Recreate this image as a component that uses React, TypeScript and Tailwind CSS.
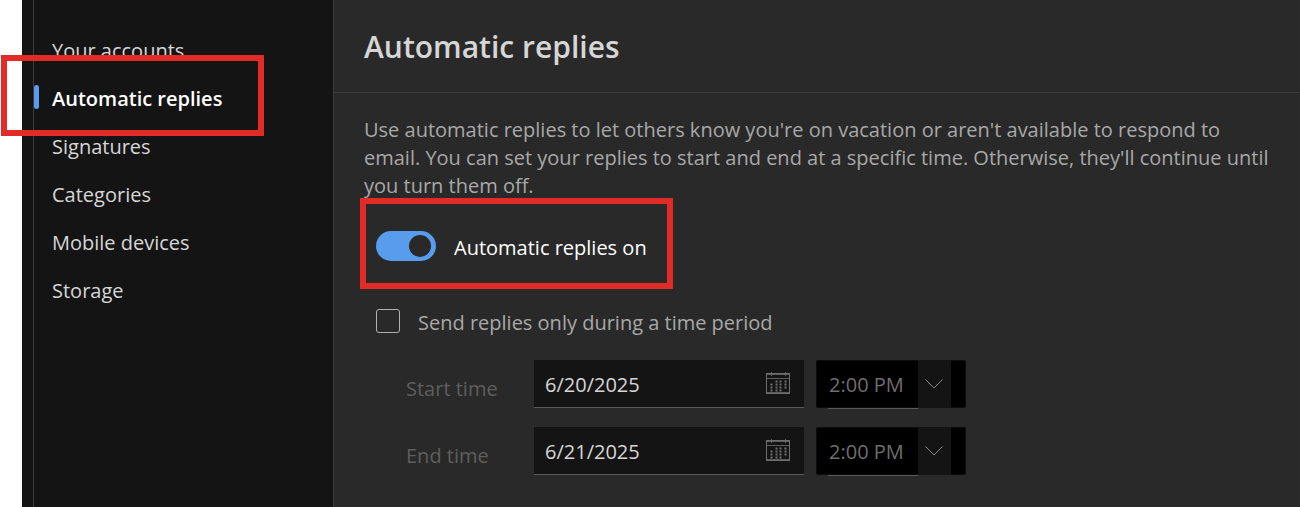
import { useState } from "react";

const navItems = [
  "Your accounts",
  "Automatic replies",
  "Signatures",
  "Categories",
  "Mobile devices",
  "Storage",
];

const calendarDots = [
  [10, 9], [14, 9], [19, 9],
  [5, 12], [10, 12], [14, 12], [19, 12],
  [5, 15], [10, 15], [14, 15], [19, 15],
  [5, 18], [10, 18], [14, 18],
];

function CalendarIcon() {
  return (
    <svg width="24" height="24" viewBox="0 0 24 24" fill="none" stroke="#6e6e6e" aria-hidden="true">
      <rect x="0.5" y="1.5" width="23" height="20" />
      <path d="M1 2.5h22M1 6.5h22M1 20.5h22M5.5 0v4M19.5 0v4" strokeOpacity="0.8" />
      {calendarDots.map(([x, y]) => (
        <rect key={`${x}-${y}`} x={x - 0.5} y={y - 0.5} width="2" height="2" fill="#6e6e6e" stroke="none" />
      ))}
    </svg>
  );
}

function ScheduleRow({ id, label, date }: { id: string; label: string; date: string }) {
  const [value, setValue] = useState(date);

  return (
    <div className="flex items-start">
      <label htmlFor={id} className="w-32 shrink-0 pt-[15px] text-[#5e5e5e]">
        {label}
      </label>
      <div className="flex h-12 w-[270px] items-center border-b border-[#5a5a5a] bg-[#141414] pr-3.5 pl-[11px]">
        <input
          id={id}
          value={value}
          onChange={(e) => setValue(e.target.value)}
          className="w-full min-w-0 bg-transparent pt-0.5 text-[#d6d6d6] outline-none"
        />
        <button type="button" aria-label={`Pick ${label.toLowerCase()}`} className="shrink-0">
          <CalendarIcon />
        </button>
      </div>
      <div className="relative ml-3 w-[150px]">
        <select
          disabled
          aria-label={`${label} hour`}
          className="h-12 w-full appearance-none rounded-xs border border-[#0c0c0c] bg-black pt-0.5 pl-3 text-[#6e6e6e] opacity-100"
        >
          <option>2:00 PM</option>
        </select>
        <span className="pointer-events-none absolute top-0 right-[15px] flex h-12 w-[33px] items-center bg-[#141414] pl-[7px]">
          <svg width="18" height="10" viewBox="0 0 18 10" fill="none" stroke="#858585" aria-hidden="true">
            <path d="M0.5 0.5 9 9l8.5-8.5" />
          </svg>
        </span>
        <span className="absolute top-12 right-12 left-3 h-px bg-[#5a5a5a]" />
      </div>
    </div>
  );
}

export default function App() {
  const [active, setActive] = useState("Automatic replies");
  const [enabled, setEnabled] = useState(true);
  const [period, setPeriod] = useState(false);

  return (
    <div className="flex min-h-screen bg-white pl-[22px] font-['Open_Sans',sans-serif] text-[20px] leading-7">
      <nav className="w-[312px] shrink-0 border-r border-[#3d3d3d] bg-[#141414] pl-[11px]">
        <ul className="h-full border-l border-[#3d3d3d] pt-[25px]">
          {navItems.map((item) => (
            <li key={item} className="relative">
              <a
                href="#"
                onClick={() => setActive(item)}
                className={
                  item === active
                    ? "flex h-12 items-center font-semibold text-white"
                    : "flex h-12 items-center text-[#d6d6d6]"
                }
              >
                <span className={item === active ? "mr-[13px] h-6 w-[5px] rounded-sm bg-[#589ded]" : "w-[18px]"} />
                <span className="pt-1">{item}</span>
              </a>
              {item === "Automatic replies" && (
                <span className="pointer-events-none absolute -top-[18px] -left-[33px] z-10 h-[81px] w-[263px] border-6 border-[#e02b27]" />
              )}
            </li>
          ))}
        </ul>
      </nav>

      <main className="min-w-0 flex-1 bg-[#292929] text-[#a8a8a8]">
        <header className="flex h-[93px] items-center border-b border-[#3d3d3d] px-[30px] pt-0.5">
          <h1 className="text-[30px] leading-10 font-semibold text-[#d6d6d6]">Automatic replies</h1>
        </header>

        <form className="px-[30px] pt-[23px]" onSubmit={(e) => e.preventDefault()}>
          <p className="pb-px">
            Use automatic replies to let others know you're on vacation or aren't available to respond to
            email. You can set your replies to start and end at a specific time. Otherwise, they'll continue
            until you turn them off.
          </p>

          <div className="relative flex h-[90px] items-center pl-3">
            <input
              id="replies"
              type="checkbox"
              role="switch"
              checked={enabled}
              onChange={(e) => setEnabled(e.target.checked)}
              className="flex h-[30px] w-[60px] shrink-0 appearance-none items-center rounded-full bg-[#8a8a8a] px-[5px] before:size-[22px] before:rounded-full before:bg-[#292929] checked:justify-end checked:bg-[#589ded]"
            />
            <label htmlFor="replies" className="pt-1 pl-[18px] text-white">
              Automatic replies {enabled ? "on" : "off"}
            </label>
            <span className="pointer-events-none absolute -top-[3px] -left-1 h-[91px] w-[313px] border-6 border-[#e02b27]" />
          </div>

          <div className="flex h-[60px] items-center pl-3">
            <input
              id="period"
              type="checkbox"
              checked={period}
              onChange={(e) => setPeriod(e.target.checked)}
              className="size-6 shrink-0 appearance-none rounded-[3px] border border-[#b0b0b0] checked:bg-[#589ded]"
            />
            <label htmlFor="period" className="pt-1 pl-[18px]">
              Send replies only during a time period
            </label>
          </div>

          <div className="flex flex-col gap-[19px] pt-[9px] pb-8 pl-[42px]">
            <ScheduleRow id="start" label="Start time" date="6/20/2025" />
            <ScheduleRow id="end" label="End time" date="6/21/2025" />
          </div>
        </form>
      </main>
    </div>
  );
}
